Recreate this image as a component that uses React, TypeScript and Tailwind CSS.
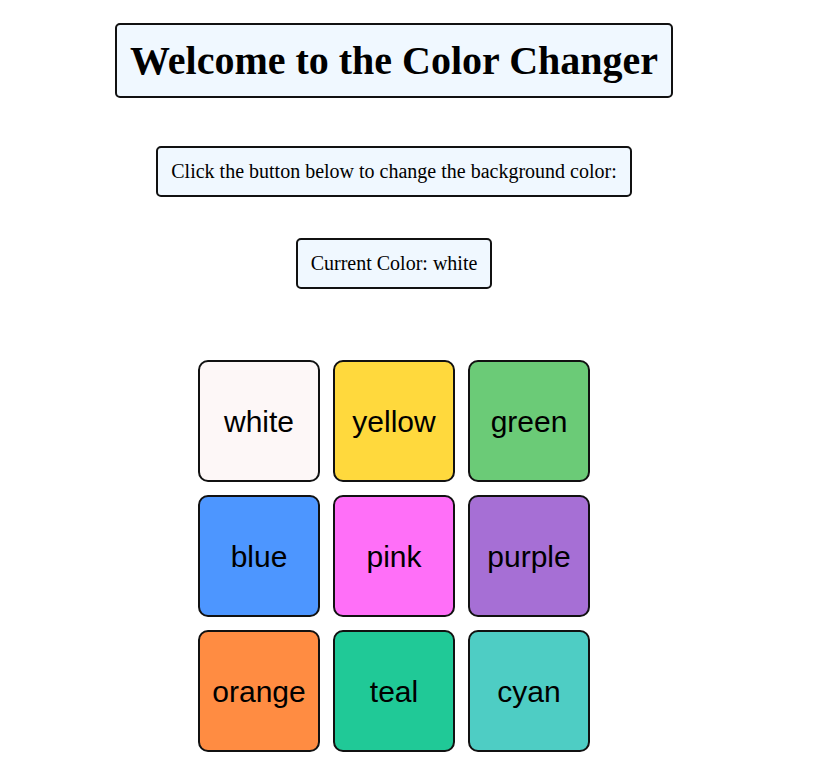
import React, { useState } from 'react';

const COLORS: { name: string; bg: string }[] = [
  { name: 'white', bg: 'bg-[#fdf7f7]' },
  { name: 'yellow', bg: 'bg-[#ffd93d]' },
  { name: 'green', bg: 'bg-[#6bcb77]' },
  { name: 'blue', bg: 'bg-[#4d96ff]' },
  { name: 'pink', bg: 'bg-[#ff6ff8]' },
  { name: 'purple', bg: 'bg-[#a66fd5]' },
  { name: 'orange', bg: 'bg-[#ff8c42]' },
  { name: 'teal', bg: 'bg-[#20c997]' },
  { name: 'cyan', bg: 'bg-[#4ecdc4]' },
];

const App: React.FC = () => {
  const [current, setCurrent] = useState('white');

  return (
    <div className="min-h-screen bg-white">
      <div className="w-[788px] flex flex-col items-center font-['Liberation_Serif',serif] text-black">
        {/* Title */}
        <h1 className="mt-[23px] border-2 border-[#111] rounded-[5px] bg-[#f0f8ff] px-[13px] py-[12px] text-[40px] leading-[47px] font-bold">
          Welcome to the Color Changer
        </h1>

        <p className="mt-[48px] border-2 border-[#111] rounded-[5px] bg-[#f0f8ff] px-[13px] py-[12px] text-[20px] leading-[23px]">
          Click the button below to change the background color:
        </p>

        <p className="mt-[41px] border-2 border-[#111] rounded-[5px] bg-[#f0f8ff] px-[13px] py-[12px] text-[20px] leading-[23px]">
          Current Color: {current}
        </p>

        {/* Color buttons */}
        <div className="mt-[71px] grid grid-cols-3 gap-[13px]">
          {COLORS.map((c) => (
            <button
              key={c.name}
              onClick={() => setCurrent(c.name)}
              className={`w-[122px] h-[122px] border-2 border-[#111] rounded-[10px] flex items-center justify-center font-['Liberation_Sans',Arial,sans-serif] text-[30px] text-black cursor-pointer ${c.bg}`}
            >
              {c.name}
            </button>
          ))}
        </div>
      </div>
    </div>
  );
};

export default App;
